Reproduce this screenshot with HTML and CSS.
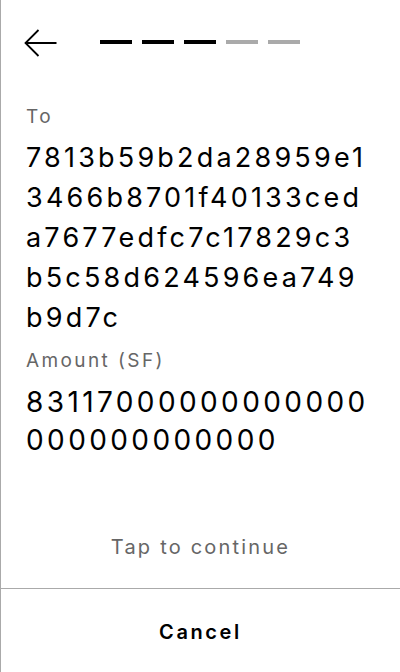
FILE: index.html
```html
<!DOCTYPE html>
<html lang="en">
<head>
<meta charset="utf-8">
<link rel="stylesheet" href="styles.css">
</head>
<body>
<div class="screen">
  <div class="header">
    <svg class="back" width="34" height="30" viewBox="0 0 34 30" aria-label="Back">
      <path d="M1.5 15 H32.5 M14.5 2 L1.5 15 L14.5 28" fill="none" stroke="#000" stroke-width="1.8"/>
    </svg>
    <div class="steps">
      <span class="step done"></span>
      <span class="step done"></span>
      <span class="step done"></span>
      <span class="step"></span>
      <span class="step"></span>
    </div>
  </div>
  <div class="content">
    <div class="field">
      <div class="label">To</div>
      <div class="value address">7813b59b2da28959e13466b8701f40133ceda7677edfc7c17829c3b5c58d624596ea749b9d7c</div>
    </div>
    <div class="field">
      <div class="label">Amount (SF)</div>
      <div class="value amount">83117000000000000000000000000</div>
    </div>
  </div>
  <div class="hint">Tap to continue</div>
  <div class="footer">
    <button class="cancel">Cancel</button>
  </div>
</div>
</body>
</html>
```
FILE: styles.css
```css
html, body {
  margin: 0;
  padding: 0;
  background: #fff;
}
body {
  font-family: Inter, "Noto Sans", sans-serif;
  color: #000;
}
.screen {
  width: 400px;
  height: 672px;
  box-sizing: border-box;
  border-left: 1px solid #aaa;
  display: flex;
  flex-direction: column;
}
.header {
  height: 86px;
  display: flex;
  align-items: center;
  padding-left: 23px;
  flex-shrink: 0;
}
.back {
  display: block;
}
.steps {
  display: flex;
  gap: 10px;
  margin-left: 42px;
  margin-top: -2px;
}
.step {
  width: 32px;
  height: 4px;
  background: #aaa;
}
.step.done {
  background: #000;
}
.content {
  padding: 17px 27px 0 25px;
  display: flex;
  flex-direction: column;
  gap: 9px;
  flex: 1;
}
.label {
  font-size: 19px;
  line-height: 27px;
  letter-spacing: 2.4px;
  color: #666;
}
.value {
  margin-top: 8px;
  word-break: break-all;
  color: #000;
}
.value.address {
  font-size: 27px;
  line-height: 40px;
  letter-spacing: 3.2px;
}
.value.amount {
  font-size: 28px;
  line-height: 38px;
  letter-spacing: 3.4px;
  margin-top: 9px;
}
.hint {
  text-align: center;
  font-size: 20px;
  line-height: 30px;
  letter-spacing: 2.2px;
  color: #666;
  padding-bottom: 26px;
}
.footer {
  border-top: 1px solid #aaa;
  height: 83px;
  box-sizing: content-box;
  display: flex;
  align-items: center;
  justify-content: center;
  flex-shrink: 0;
}
.cancel {
  background: none;
  border: none;
  padding: 3px 0 0 0;
  font-family: Inter, "Noto Sans", sans-serif;
  font-size: 20px;
  font-weight: 600;
  letter-spacing: 2.6px;
  color: #000;
}
```
